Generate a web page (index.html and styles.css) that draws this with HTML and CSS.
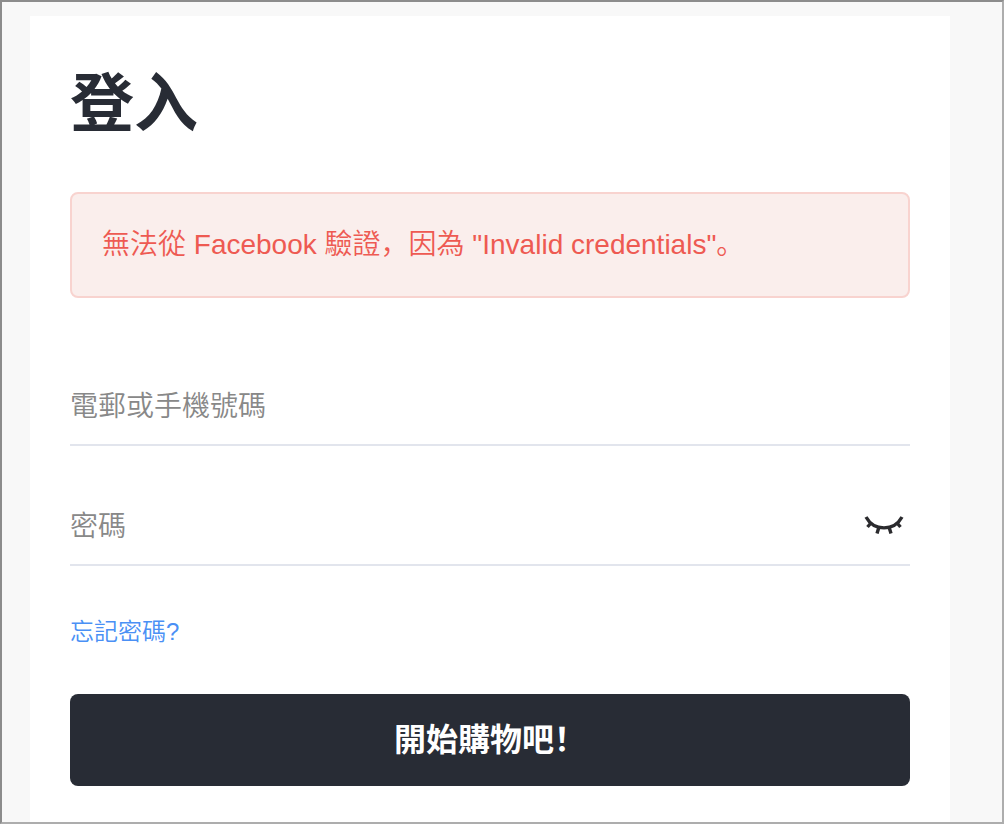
FILE: index.html
```html
<!DOCTYPE html>
<html lang="zh-Hant">
<head>
<meta charset="utf-8">
<meta name="viewport" content="width=device-width, initial-scale=1">
<title>登入</title>
<link rel="stylesheet" href="styles.css">
</head>
<body>
<main class="card">
  <h1 class="title" lang="zh-Hans">登入</h1>
  <p class="alert" role="alert">無法從 Facebook 驗證<span class="punct" lang="zh-Hans">，</span>因為 "Invalid credentials"<span class="punct" lang="zh-Hans">。</span></p>
  <form class="form">
    <div class="field">
      <input class="input" type="text" placeholder="電郵或手機號碼" aria-label="電郵或手機號碼">
    </div>
    <div class="field">
      <input class="input" type="password" placeholder="密碼" aria-label="密碼">
      <button class="toggle" type="button" aria-label="顯示密碼">
        <svg class="eye" viewBox="0 0 40 22" fill="none" stroke="#2b2b2e" stroke-width="3.400">
          <path d="M2 1C10 15.500 30 15.500 38 1"/>
          <path d="M7 7L3.500 11M15 11L13 17.500M25 11L27 17.500M33 7L36.500 11"/>
        </svg>
      </button>
    </div>
    <a class="forgot" href="#">忘記密碼?</a>
    <button class="submit" type="submit">開始購物吧<span class="punct" lang="zh-Hans">！</span></button>
  </form>
</main>
</body>
</html>
```
FILE: styles.css
```css
* {
  box-sizing: border-box;
}

body {
  display: flex;
  min-height: 100vh;
  margin: 0;
  padding: 14px 52px 0 28px;
  border: 2px solid #adadad;
  border-top-color: #8c8c8c;
  border-left-color: #8c8c8c;
  background: #f8f8f8;
  color: #282c35;
  font-family: "Liberation Sans", "Noto Sans CJK TC", sans-serif;
  font-size: 28px;
  font-weight: 350;
}

.card {
  flex: 1;
  min-width: 0;
  padding: 40px 40px 36px;
  background: #fff;
}

.title {
  margin: 0 0 40px;
  font-family: "Liberation Sans", "Noto Sans CJK SC", sans-serif;
  font-size: 64px;
  font-weight: 700;
  line-height: 96px;
}

.alert {
  margin: 0 0 68px;
  padding: 30px;
  border: 2px solid #f8d3cf;
  border-radius: 8px;
  background: #faeeec;
  color: #ee5a52;
  line-height: 42px;
}

.punct {
  font-family: "Noto Sans CJK SC", sans-serif;
  line-height: 1;
}

.form {
  display: flex;
  flex-direction: column;
}

.field {
  display: flex;
  align-items: center;
  height: 80px;
  padding-top: 4px;
  margin-bottom: 40px;
  border-bottom: 2px solid #e2e5ed;
}

.input {
  flex: 1;
  min-width: 0;
  height: 72px;
  padding: 0;
  border: 0;
  outline: 0;
  background: transparent;
  color: inherit;
  font: inherit;
}

.input::placeholder {
  color: #888;
  opacity: 1;
}

.toggle {
  display: flex;
  padding: 0 6px;
  border: 0;
  background: transparent;
}

.eye {
  width: 40px;
  height: 22px;
}

.forgot {
  align-self: flex-start;
  margin: 8px 0 44px;
  color: #4a90f5;
  font-size: 24px;
  line-height: 36px;
  text-decoration: none;
}

.submit {
  height: 92px;
  padding: 0 0 6px;
  border: 0;
  border-radius: 8px;
  background: #282c35;
  color: #fff;
  font: inherit;
  font-size: 32px;
  font-weight: 700;
}
```
